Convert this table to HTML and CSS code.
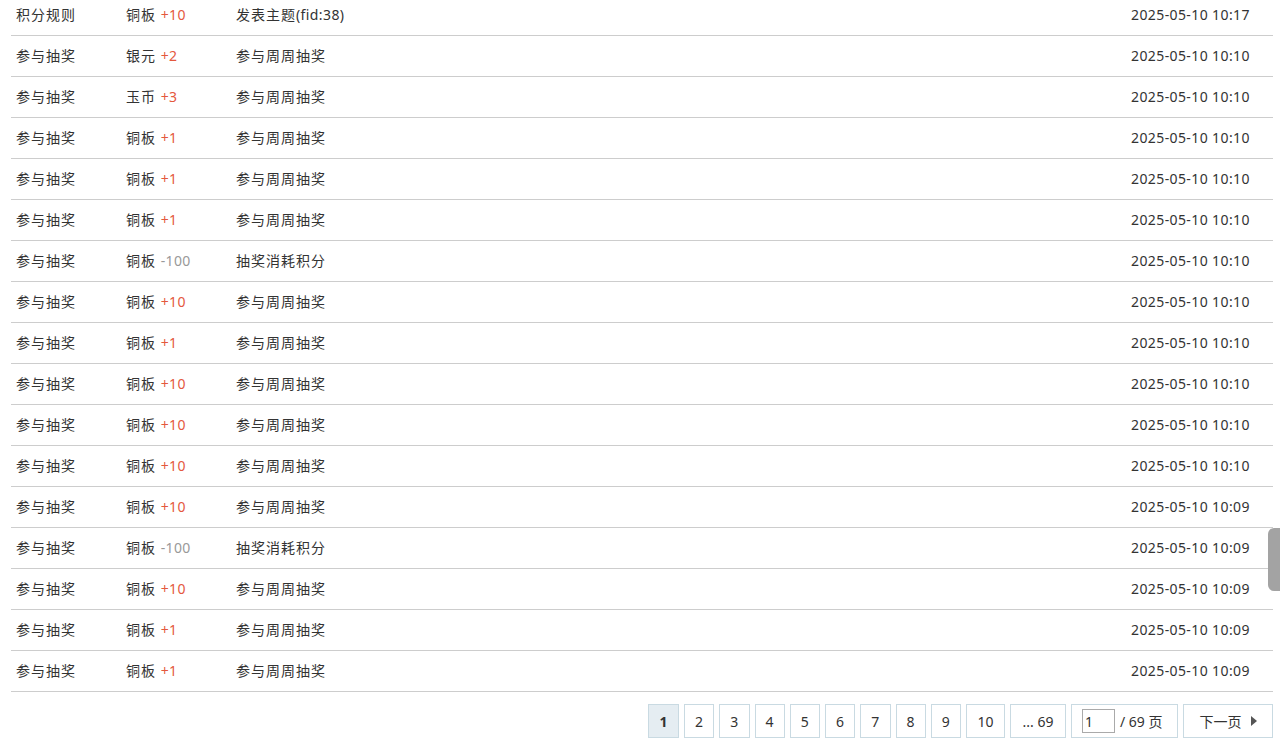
FILE: index.html
```
<!DOCTYPE html>
<html lang="zh-CN">
<head>
  <meta charset="UTF-8">
  <meta name="viewport" content="width=device-width, initial-scale=1.0">
  <title>积分记录</title>
  <link rel="stylesheet" href="styles.css">
</head>
<body>
  <div class="log">
    <table class="log-table">
      <tr><td class="c-op">积分规则</td><td class="c-credit">铜板 <em class="up">+10</em></td><td class="c-note">发表主题<span class="lat">(fid:38)</span></td><td class="c-time">2025-05-10 10:17</td></tr>
      <tr><td class="c-op">参与抽奖</td><td class="c-credit">银元 <em class="up">+2</em></td><td class="c-note">参与周周抽奖</td><td class="c-time">2025-05-10 10:10</td></tr>
      <tr><td class="c-op">参与抽奖</td><td class="c-credit">玉币 <em class="up">+3</em></td><td class="c-note">参与周周抽奖</td><td class="c-time">2025-05-10 10:10</td></tr>
      <tr><td class="c-op">参与抽奖</td><td class="c-credit">铜板 <em class="up">+1</em></td><td class="c-note">参与周周抽奖</td><td class="c-time">2025-05-10 10:10</td></tr>
      <tr><td class="c-op">参与抽奖</td><td class="c-credit">铜板 <em class="up">+1</em></td><td class="c-note">参与周周抽奖</td><td class="c-time">2025-05-10 10:10</td></tr>
      <tr><td class="c-op">参与抽奖</td><td class="c-credit">铜板 <em class="up">+1</em></td><td class="c-note">参与周周抽奖</td><td class="c-time">2025-05-10 10:10</td></tr>
      <tr><td class="c-op">参与抽奖</td><td class="c-credit">铜板 <em class="down">-100</em></td><td class="c-note">抽奖消耗积分</td><td class="c-time">2025-05-10 10:10</td></tr>
      <tr><td class="c-op">参与抽奖</td><td class="c-credit">铜板 <em class="up">+10</em></td><td class="c-note">参与周周抽奖</td><td class="c-time">2025-05-10 10:10</td></tr>
      <tr><td class="c-op">参与抽奖</td><td class="c-credit">铜板 <em class="up">+1</em></td><td class="c-note">参与周周抽奖</td><td class="c-time">2025-05-10 10:10</td></tr>
      <tr><td class="c-op">参与抽奖</td><td class="c-credit">铜板 <em class="up">+10</em></td><td class="c-note">参与周周抽奖</td><td class="c-time">2025-05-10 10:10</td></tr>
      <tr><td class="c-op">参与抽奖</td><td class="c-credit">铜板 <em class="up">+10</em></td><td class="c-note">参与周周抽奖</td><td class="c-time">2025-05-10 10:10</td></tr>
      <tr><td class="c-op">参与抽奖</td><td class="c-credit">铜板 <em class="up">+10</em></td><td class="c-note">参与周周抽奖</td><td class="c-time">2025-05-10 10:10</td></tr>
      <tr><td class="c-op">参与抽奖</td><td class="c-credit">铜板 <em class="up">+10</em></td><td class="c-note">参与周周抽奖</td><td class="c-time">2025-05-10 10:09</td></tr>
      <tr><td class="c-op">参与抽奖</td><td class="c-credit">铜板 <em class="down">-100</em></td><td class="c-note">抽奖消耗积分</td><td class="c-time">2025-05-10 10:09</td></tr>
      <tr><td class="c-op">参与抽奖</td><td class="c-credit">铜板 <em class="up">+10</em></td><td class="c-note">参与周周抽奖</td><td class="c-time">2025-05-10 10:09</td></tr>
      <tr><td class="c-op">参与抽奖</td><td class="c-credit">铜板 <em class="up">+1</em></td><td class="c-note">参与周周抽奖</td><td class="c-time">2025-05-10 10:09</td></tr>
      <tr><td class="c-op">参与抽奖</td><td class="c-credit">铜板 <em class="up">+1</em></td><td class="c-note">参与周周抽奖</td><td class="c-time">2025-05-10 10:09</td></tr>
    </table>

    <!-- 分页 -->
    <div class="pg">
      <strong class="pg-item pg-cur">1</strong>
      <a class="pg-item" href="#">2</a>
      <a class="pg-item" href="#">3</a>
      <a class="pg-item" href="#">4</a>
      <a class="pg-item" href="#">5</a>
      <a class="pg-item" href="#">6</a>
      <a class="pg-item" href="#">7</a>
      <a class="pg-item" href="#">8</a>
      <a class="pg-item" href="#">9</a>
      <a class="pg-item pg-wide" href="#">10</a>
      <a class="pg-item pg-last" href="#">... 69</a>
      <label class="pg-item pg-jump"><input class="pg-input" type="text" value="1"> / 69 页</label>
      <a class="pg-item pg-next" href="#">下一页 <span class="pg-arrow"></span></a>
    </div>
  </div>

  <div class="scroll-thumb"></div>
</body>
</html>
```

FILE: styles.css
```
body {
  margin: 0;
  padding: 0;
  background: #fff;
  color: #333;
  font-family: "Noto Sans", "Noto Sans CJK SC", sans-serif;
  font-size: 14px;
  overflow: hidden;
}

.log {
  margin: -5px 7px 0 11px;
}

.log-table {
  width: 100%;
  border-collapse: collapse;
  table-layout: fixed;
}

.log-table td {
  height: 40px;
  padding: 0 0 0 5px;
  border-bottom: 1px solid #cdcdcd;
  white-space: nowrap;
  line-height: 20px;
  letter-spacing: 1px;
}

.c-op { width: 105px; }
.c-credit { width: 105px; }
.c-time { width: 142px; }

.log-table .c-time,
.log-table .lat,
.log-table em {
  letter-spacing: 0.4px;
}

.log-table em {
  font-style: normal;
}

.up { color: #e4583e; }
.down { color: #999; }

.pg {
  display: flex;
  justify-content: flex-end;
  gap: 5px;
  margin-top: 12px;
}

.pg-item {
  display: flex;
  align-items: center;
  justify-content: center;
  box-sizing: border-box;
  height: 34px;
  width: 30.25px;
  border: 1px solid #c9dae2;
  background: #fff;
  color: #333;
  text-decoration: none;
  font-size: 14px;
}

.pg-cur {
  width: 31px;
  background: #e5edf2;
  font-weight: bold;
}

.pg-wide { width: 39px; }
.pg-last { width: 56px; }

.pg-jump {
  width: 107px;
  justify-content: flex-start;
  gap: 5px;
  padding: 0 10px;
}

.pg-input {
  box-sizing: border-box;
  width: 33px;
  height: 24px;
  margin: 0;
  padding: 0 2px;
  border: 1px solid #aaa;
  font: 14px "Noto Sans", "Noto Sans CJK SC", sans-serif;
  color: #333;
}

.pg-next {
  width: 90px;
  gap: 9px;
}

.pg-arrow {
  width: 0;
  height: 0;
  border-top: 5px solid transparent;
  border-bottom: 5px solid transparent;
  border-left: 6px solid #555;
}

.scroll-thumb {
  position: absolute;
  top: 528px;
  right: 0;
  width: 12px;
  height: 63px;
  background: #a3a3a3;
  border-radius: 6px 0 0 6px;
}
```
